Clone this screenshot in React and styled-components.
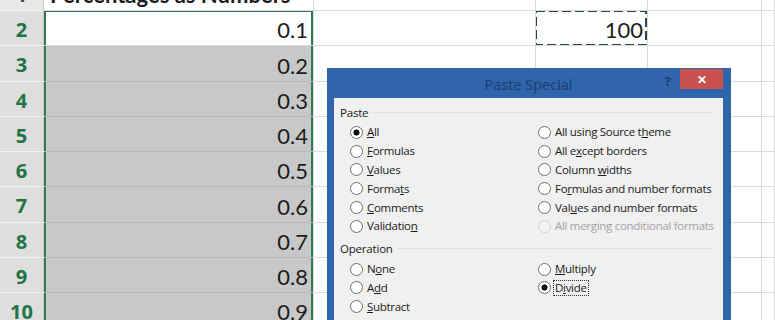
import React from "react";
import styled, { createGlobalStyle } from "styled-components";

const GlobalStyle = createGlobalStyle`
  html, body {
    margin: 0;
    padding: 0;
    background: #ffffff;
    overflow: hidden;
  }
  body {
    width: 775px;
    height: 320px;
    position: relative;
  }
`;

const COLS = [270, 222, 112, 114, 13];
const ROW_H = 35.25;

const rows = [
  { n: 1, a: "Percentages as Numbers", title: true },
  { n: 2, a: "0.1", c: "100", active: true },
  { n: 3, a: "0.2" },
  { n: 4, a: "0.3" },
  { n: 5, a: "0.4" },
  { n: 6, a: "0.5" },
  { n: 7, a: "0.6" },
  { n: 8, a: "0.7" },
  { n: 9, a: "0.8" },
  { n: 10, a: "0.9" },
];

const pasteOptions = [
  ["&All", "All using Source t&heme"],
  ["&Formulas", "All e&xcept borders"],
  ["&Values", "Column &widths"],
  ["Forma&ts", "Fo&rmulas and number formats"],
  ["&Comments", "Val&ues and number formats"],
  ["Validatio&n", "!All merging conditional formats"],
];

const operationOptions = [
  ["N&one", "&Multiply"],
  ["A&dd", "D&ivide"],
  ["&Subtract", null],
];

export default function App() {
  return (
    <>
      <GlobalStyle />
      <Sheet>
        {rows.map((r) => (
          <Row key={r.n}>
            <RowHead $sel={r.n > 1}>{r.n}</RowHead>
            <Cell
              $w={COLS[0]}
              $sel={r.n > 2}
              $inSel={r.n > 1}
              $selTop={r.n === 2}
              $title={r.title}
            >
              {r.a}
            </Cell>
            <Cell $w={COLS[1]} />
            <Cell $w={COLS[2]}>
              {r.c}
              {r.c && (
                <Marquee viewBox="0 0 112 36">
                  <rect
                    x="1"
                    y="1"
                    width="110"
                    height="34"
                    fill="none"
                    stroke="#2e4a3b"
                    strokeWidth="2"
                    strokeDasharray="9 4"
                  />
                </Marquee>
              )}
            </Cell>
            <Cell $w={COLS[3]} />
            <Cell $w={COLS[4]} />
          </Row>
        ))}
      </Sheet>

      <Dialog>
        <TitleBar>
          <span />
          <Title>Paste Special</Title>
          <TitleButtons>
            <Help>?</Help>
            <CloseButton>✕</CloseButton>
          </TitleButtons>
        </TitleBar>
        <Body>
          <Legend>Paste</Legend>
          <OptionGrid>
            {pasteOptions.map((pair, i) =>
              pair.map((label, j) => (
                <Option key={`${i}-${j}`} label={label} checked={i === 0 && j === 0} />
              ))
            )}
          </OptionGrid>
          <Legend $gap={4}>Operation</Legend>
          <OptionGrid>
            {operationOptions.map((pair, i) =>
              pair.map((label, j) =>
                label ? (
                  <Option
                    key={`${i}-${j}`}
                    label={label}
                    checked={i === 1 && j === 1}
                    focused={i === 1 && j === 1}
                  />
                ) : (
                  <span key={`${i}-${j}`} />
                )
              )
            )}
          </OptionGrid>
        </Body>
      </Dialog>
    </>
  );
}

function Option({ label, checked, focused }) {
  const disabled = label.startsWith("!");
  const text = disabled ? label.slice(1) : label;
  const at = text.indexOf("&");
  const content =
    at < 0 ? (
      text
    ) : (
      <>
        {text.slice(0, at)}
        <u>{text[at + 1]}</u>
        {text.slice(at + 2)}
      </>
    );
  return (
    <OptionRow $disabled={disabled}>
      <Radio $disabled={disabled} $checked={checked} />
      <OptionLabel $focused={focused}>{content}</OptionLabel>
    </OptionRow>
  );
}

const Sheet = styled.div`
  margin-top: -24.25px;
  display: flex;
  flex-direction: column;
`;

const Row = styled.div`
  display: flex;
  height: ${ROW_H}px;
`;

const RowHead = styled.div`
  box-sizing: border-box;
  width: 44px;
  flex: none;
  display: flex;
  align-items: center;
  justify-content: center;
  padding-top: 3px;
  background: ${(p) => (p.$sel ? "#dedede" : "#e8e8e8")};
  border-bottom: 1px solid #f2f2f2;
  border-right: 1px solid #c9c9c9;
  color: ${(p) => (p.$sel ? "#217346" : "#444")};
  font-family: "Open Sans", "Liberation Sans", sans-serif;
  font-weight: 700;
  font-size: 20px;
`;

const Cell = styled.div`
  box-sizing: border-box;
  position: relative;
  width: ${(p) => p.$w}px;
  flex: none;
  display: flex;
  align-items: flex-end;
  justify-content: ${(p) => (p.$title ? "flex-start" : "flex-end")};
  padding: 0 ${(p) => (p.$inSel ? 5 : 4)}px 2px ${(p) => (p.$title ? 6 : 4)}px;
  background: ${(p) => (p.$sel ? "#c8c8c8" : "#ffffff")};
  border-right: 1px solid #dadada;
  border-bottom: 1px solid ${(p) => (p.$sel ? "#b7b7b7" : "#dadada")};
  box-shadow: ${(p) =>
    p.$inSel
      ? `inset 2px 0 0 #2f7a4f, inset -2px 0 0 #2f7a4f${p.$selTop ? ", inset 0 1px 0 #2f7a4f" : ""}`
      : "none"};
  font-family: Lato, "Open Sans", sans-serif;
  font-size: 22px;
  font-weight: ${(p) => (p.$title ? 700 : 400)};
  color: #1c1c1c;
  white-space: nowrap;
  overflow: hidden;
`;

const Marquee = styled.svg`
  position: absolute;
  left: -1px;
  top: -1px;
  width: 112px;
  height: 36px;
`;

const Dialog = styled.div`
  position: absolute;
  left: 327px;
  top: 68px;
  width: 404px;
  height: 252px;
  box-sizing: border-box;
  padding: 0 8px 0 7px;
  background: #3064ab;
  display: flex;
  flex-direction: column;
  font-family: "Open Sans", "Liberation Sans", sans-serif;
  color: #1a1a1a;
`;

const TitleBar = styled.div`
  height: 30px;
  flex: none;
  display: grid;
  grid-template-columns: 1fr auto 1fr;
  align-items: center;
`;

const Title = styled.div`
  font-size: 14.5px;
  color: #1c3d72;
  padding-top: 2px;
`;

const TitleButtons = styled.div`
  justify-self: end;
  align-self: start;
  display: flex;
  align-items: flex-start;
  gap: 9px;
`;

const Help = styled.div`
  margin-top: 4px;
  font-size: 13px;
  font-weight: 700;
  color: #1c3d72;
`;

const CloseButton = styled.div`
  margin-top: 1px;
  width: 43px;
  height: 20px;
  background: #c9504c;
  color: #ffffff;
  display: flex;
  align-items: center;
  justify-content: center;
  font-size: 12px;
  font-weight: 700;
`;

const Body = styled.div`
  flex: 1;
  background: #f0f0f0;
  padding: 5px 10px 0 6px;
`;

const Legend = styled.div`
  height: 18px;
  margin-top: ${(p) => p.$gap || 0}px;
  display: flex;
  align-items: center;
  gap: 5px;
  font-size: 11.5px;
  letter-spacing: -0.2px;

  &::after {
    content: "";
    flex: 1;
    border-top: 1px solid #dddddd;
  }
`;

const OptionGrid = styled.div`
  display: grid;
  grid-template-columns: 188px 1fr;
  grid-auto-rows: 18.8px;
  padding-left: 10px;
  margin-top: 2px;
`;

const OptionRow = styled.div`
  display: flex;
  align-items: center;
  gap: 2px;
  font-size: 11.5px;
  letter-spacing: -0.3px;
  color: ${(p) => (p.$disabled ? "#a3a3a3" : "#1a1a1a")};
  white-space: nowrap;
`;

const Radio = styled.span`
  box-sizing: border-box;
  width: 13px;
  height: 13px;
  flex: none;
  border-radius: 50%;
  border: 1px solid ${(p) => (p.$disabled ? "#d2d2d2" : "#6f6f6f")};
  background: ${(p) =>
    p.$checked
      ? "radial-gradient(circle, #111 0 2.8px, #ffffff 3.3px)"
      : p.$disabled
      ? "#f2f2f2"
      : "#ffffff"};
`;

const OptionLabel = styled.span`
  padding: 0 1px;
  border: 1px dotted ${(p) => (p.$focused ? "#333333" : "transparent")};
  line-height: 14px;
`;
